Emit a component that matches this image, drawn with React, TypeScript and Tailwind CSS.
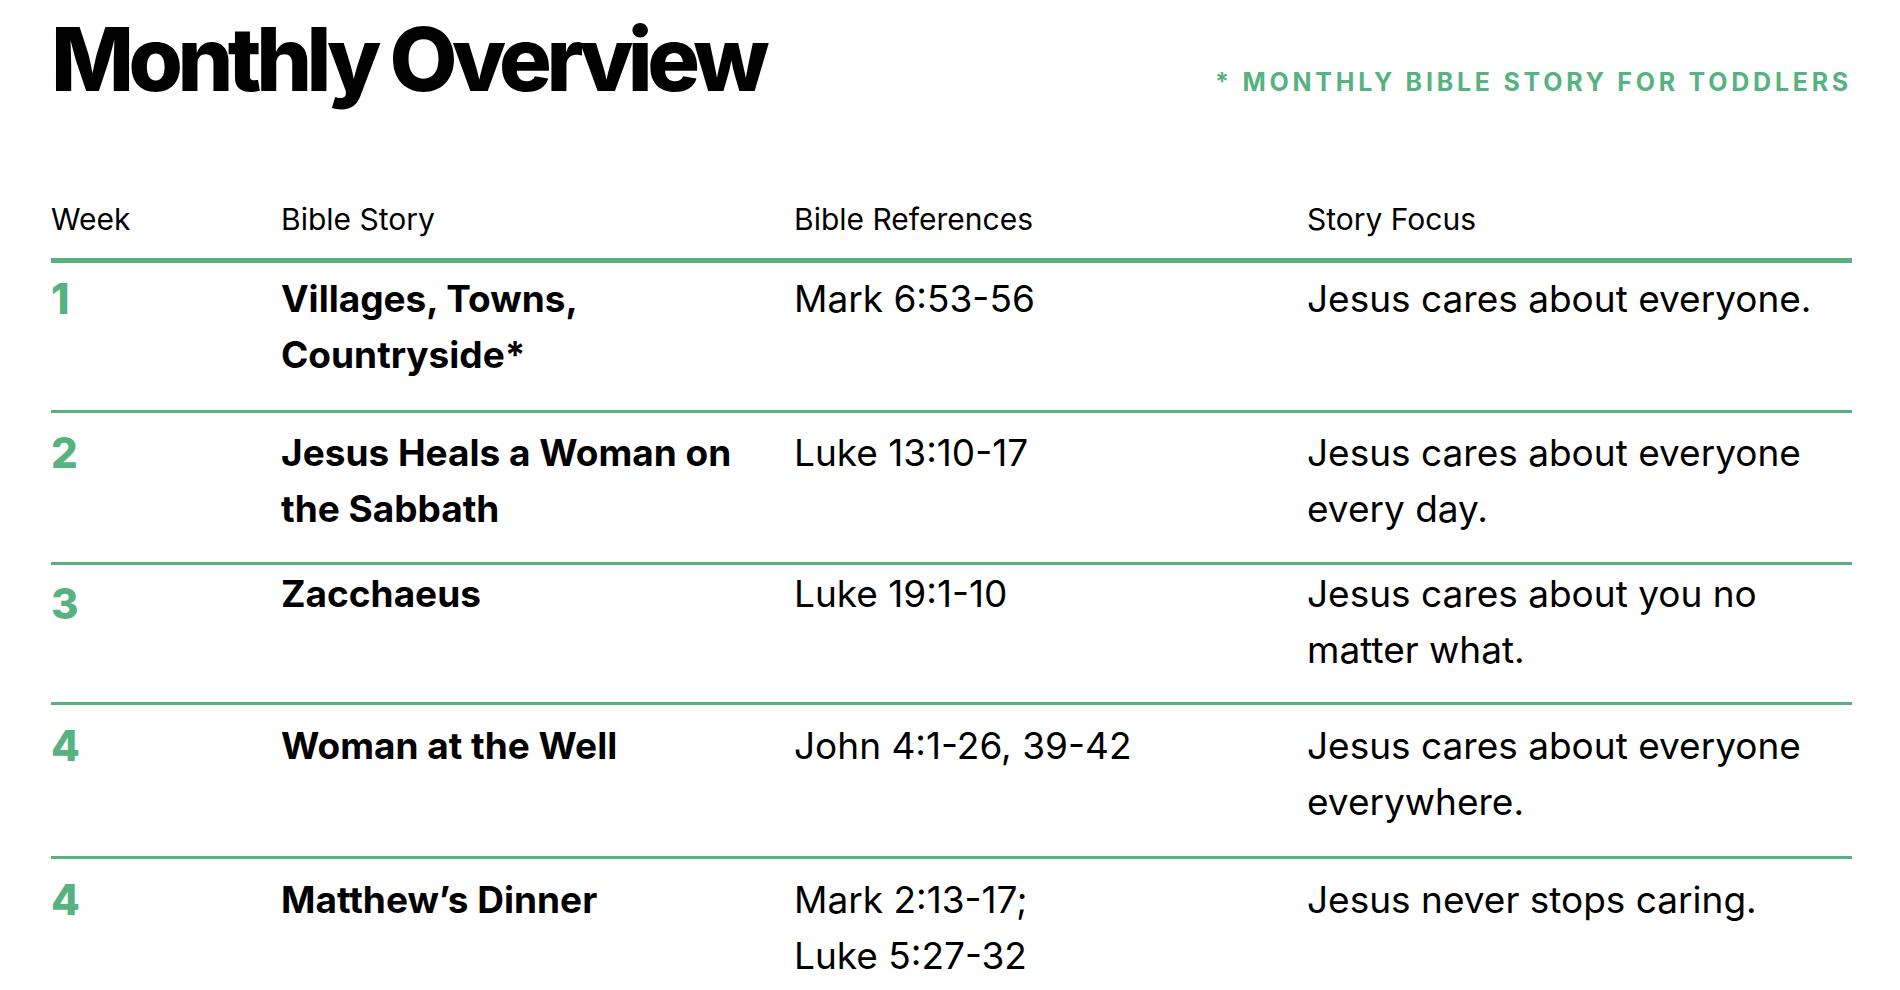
import React from "react";

type Row = {
  week: string;
  story: React.ReactNode;
  refs: React.ReactNode;
  focus: string;
  pt: string;
  pb: string;
  weekOffset?: string;
};

const rows: Row[] = [
  {
    week: "1",
    story: "Villages, Towns, Countryside*",
    refs: "Mark 6:53-56",
    focus: "Jesus cares about everyone.",
    pt: "pt-[8px]",
    pb: "pb-[27px]",
  },
  {
    week: "2",
    story: "Jesus Heals a Woman on the Sabbath",
    refs: "Luke 13:10-17",
    focus: "Jesus cares about everyone every day.",
    pt: "pt-[12px]",
    pb: "pb-[25px]",
  },
  {
    week: "3",
    story: "Zacchaeus",
    refs: "Luke 19:1-10",
    focus: "Jesus cares about you no matter what.",
    pt: "pt-[1px]",
    pb: "pb-[24px]",
    weekOffset: "mt-[10px]",
  },
  {
    week: "4",
    story: "Woman at the Well",
    refs: "John 4:1-26, 39-42",
    focus: "Jesus cares about everyone everywhere.",
    pt: "pt-[13px]",
    pb: "pb-[26px]",
  },
  {
    week: "4",
    story: "Matthew\u2019s Dinner",
    refs: (
      <>
        Mark 2:13-17;
        <br />
        Luke 5:27-32
      </>
    ),
    focus: "Jesus never stops caring.",
    pt: "pt-[13px]",
    pb: "pb-[20px]",
  },
];

export default function App() {
  return (
    <div className="w-[1900px] h-[990px] overflow-hidden bg-white text-black font-['Inter','Noto_Sans',sans-serif]">
      <div className="pl-[51px] pr-[48px] pt-[15px]">
        <div className="flex items-baseline justify-between">
          <h1 className="text-[88px] leading-none font-extrabold tracking-[-0.063em]">
            Monthly Overview
          </h1>
          <div className="text-[25px] font-bold tracking-[0.15em] text-[#56b37f]">
            * MONTHLY BIBLE STORY FOR TODDLERS
          </div>
        </div>

        <div className="mt-[96px]">
          <div className="grid grid-cols-[230px_513px_513px_1fr] border-b-[5px] border-[#56b37f] pb-[19px] text-[30px] leading-[40px]">
            <div>Week</div>
            <div>Bible Story</div>
            <div>Bible References</div>
            <div>Story Focus</div>
          </div>

          {rows.map((r, i) => (
            <div
              key={i}
              className={`grid grid-cols-[230px_513px_513px_1fr] text-[37px] leading-[56px] ${r.pt} ${r.pb} ${
                i > 0 ? "border-t-[3px] border-[#56b37f]" : ""
              }`}
            >
              <div className={`text-[42px] font-extrabold text-[#56b37f] ${r.weekOffset ?? ""}`}>
                {r.week}
              </div>
              <div className="font-bold pr-[40px]">{r.story}</div>
              <div className="pr-[40px]">{r.refs}</div>
              <div className="pr-[6px]">{r.focus}</div>
            </div>
          ))}
        </div>
      </div>
    </div>
  );
}
